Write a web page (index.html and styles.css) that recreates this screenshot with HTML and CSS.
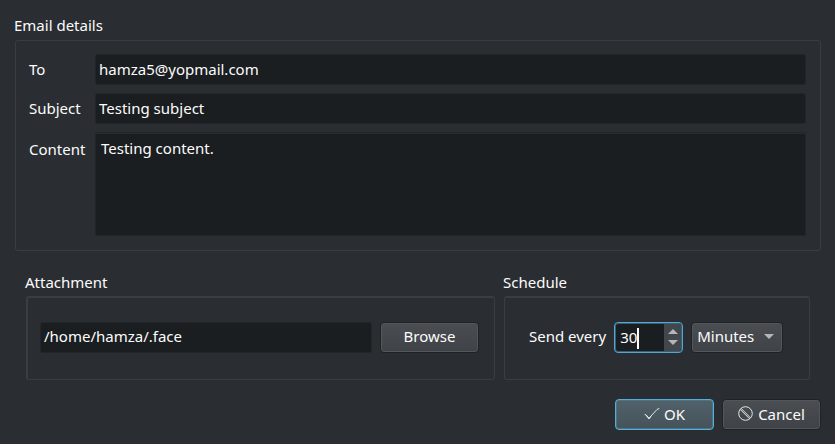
FILE: index.html
```html
<!DOCTYPE html>
<html lang="en">
<head>
<meta charset="utf-8">
<meta name="viewport" content="width=device-width, initial-scale=1">
<title>Email schedule</title>
<link rel="stylesheet" href="styles.css">
</head>
<body>
<form class="dialog">
  <fieldset class="group">
    <legend class="group-title">Email details</legend>
    <div class="frame details">
      <label for="to">To</label>
      <input class="field" id="to" type="text" value="hamza5@yopmail.com">
      <label for="subject">Subject</label>
      <input class="field" id="subject" type="text" value="Testing subject">
      <label class="content-label" for="content">Content</label>
      <textarea class="field content" id="content">Testing content.</textarea>
    </div>
  </fieldset>

  <div class="columns">
    <fieldset class="group attachment">
      <legend class="group-title">Attachment</legend>
      <div class="frame row heavy-left">
        <input class="field path" type="text" aria-label="Attachment path" value="/home/hamza/.face">
        <button class="button" type="button">Browse</button>
      </div>
    </fieldset>
    <fieldset class="group schedule">
      <legend class="group-title">Schedule</legend>
      <div class="frame row schedule-row">
        <label for="every">Send every</label>
        <div class="spin">
          <input class="spin-input" id="every" type="text" inputmode="numeric" value="30">
          <span class="caret"></span>
          <div class="spin-steps">
            <button class="step" type="button" aria-label="Increase"><svg width="10" height="5" viewBox="0 0 10 5"><path d="M0 5 5 0l5 5z"/></svg></button>
            <button class="step" type="button" aria-label="Decrease"><svg width="10" height="5" viewBox="0 0 10 5"><path d="M0 0l5 5 5-5z"/></svg></button>
          </div>
        </div>
        <div class="select">
          <select class="button" aria-label="Unit">
            <option>Minutes</option>
            <option>Hours</option>
          </select>
          <svg class="arrow" width="10" height="5" viewBox="0 0 10 5"><path d="M0 0l5 5 5-5z"/></svg>
        </div>
      </div>
    </fieldset>
  </div>

  <div class="actions">
    <button class="button default" type="submit">
      <svg class="icon" width="16" height="16" viewBox="0 0 16 16"><path d="M.7 8.7H2L5 12.2 13 3.5 15.3 2.4"/><path d="M2 9.3 5 13 7 10.6"/></svg>OK
    </button>
    <button class="button" type="button">
      <svg class="icon" width="16" height="16" viewBox="0 0 16 16"><circle cx="7.5" cy="7.5" r="6.8"/><path d="M3 2.3 12.7 12"/><path d="M2.1 3.3 11.7 12.9"/></svg>Cancel
    </button>
  </div>
</form>
</body>
</html>
```

FILE: styles.css
```css
* {
  box-sizing: border-box;
}

body {
  margin: 0;
  background: #2a2e32;
  color: #fcfcfc;
  font: 15px/20px "Noto Sans", sans-serif;
}

.dialog {
  padding: 15px 14px 13px;
}

.group {
  min-width: 0;
  margin: 0;
  padding: 0;
  border: 0;
}

.group-title {
  padding: 0;
  margin-bottom: 4px;
}

.frame {
  margin-left: 1px;
  border: 1px solid #3a3e41;
  border-radius: 3px;
}

.frame label {
  padding-bottom: 2px;
  white-space: nowrap;
}

.details {
  display: grid;
  grid-template-columns: 56px 1fr;
  gap: 8px 10px;
  align-items: center;
  margin-top: 1px;
  padding: 13px 14px 14px 13px;
}

.details .content-label {
  align-self: start;
  padding-top: 7px;
}

.field {
  width: 100%;
  min-width: 0;
  height: 31px;
  margin: 0;
  padding: 0 3px 2px;
  border: 1px solid #222629;
  border-radius: 3px;
  outline: 0;
  background: #1b1e20;
  color: inherit;
  font: inherit;
}

.content {
  display: block;
  height: 104px;
  padding: 5px;
  border-radius: 1px;
  box-shadow: inset 0 1px #292c30;
  resize: none;
}

.columns {
  display: grid;
  grid-template-columns: 470fr 307fr;
  gap: 8px;
  padding: 21px 11px 0 11px;
}

.row {
  display: flex;
  align-items: center;
  gap: 8px;
  height: 84px;
  padding: 0 15px 3px 12px;
  border-top-width: 2px;
}

.heavy-left {
  border-left-width: 2px;
}

.path {
  flex: 1;
}

.schedule-row {
  padding: 0 24px 3px;
}

.button {
  display: inline-flex;
  align-items: center;
  justify-content: center;
  gap: 4px;
  width: 99px;
  height: 31px;
  margin: 0;
  padding: 0 0 2px;
  border: 1px solid #1f2326;
  border-radius: 4px;
  outline: 0;
  background: linear-gradient(#4a4e52, #3f4347);
  box-shadow: inset 0 0 0 1px #53575a;
  color: inherit;
  font: inherit;
}

.default {
  border: 1px solid #53afe0;
  background: linear-gradient(#52626a, #45525a);
  box-shadow: inset 0 0 0 1px #52717f;
}

.icon {
  fill: none;
  stroke: #e4e6e7;
  stroke-width: 1;
}

.spin {
  position: relative;
  display: flex;
  flex: none;
  width: 69px;
  height: 31px;
  overflow: hidden;
  border: 1px solid #53a5d2;
  border-radius: 4px;
  background: #1b1e20;
  box-shadow: inset 0 0 0 1px #346078;
}

.spin-input {
  flex: 1;
  min-width: 0;
  padding: 0 0 0 5px;
  border: 0;
  outline: 0;
  background: none;
  color: inherit;
  font: inherit;
}

.caret {
  position: absolute;
  top: 5px;
  left: 22px;
  width: 2px;
  height: 21px;
  background: #fcfcfc;
}

.spin-steps {
  display: flex;
  flex-direction: column;
  justify-content: center;
  gap: 6px;
  width: 17px;
  margin: 1px 1px 1px 0;
  background: #43474b;
}

.step {
  display: flex;
  justify-content: center;
  padding: 0;
  border: 0;
  background: none;
}

.step path,
.arrow path {
  fill: #b4b7b9;
}

.select {
  position: relative;
}

.select .button {
  display: block;
  width: 92px;
  padding: 0 20px 2px 5px;
  appearance: none;
}

.arrow {
  position: absolute;
  top: 12px;
  right: 9px;
  pointer-events: none;
}

.actions {
  display: flex;
  justify-content: flex-end;
  gap: 8px;
  padding-top: 19px;
}
```
